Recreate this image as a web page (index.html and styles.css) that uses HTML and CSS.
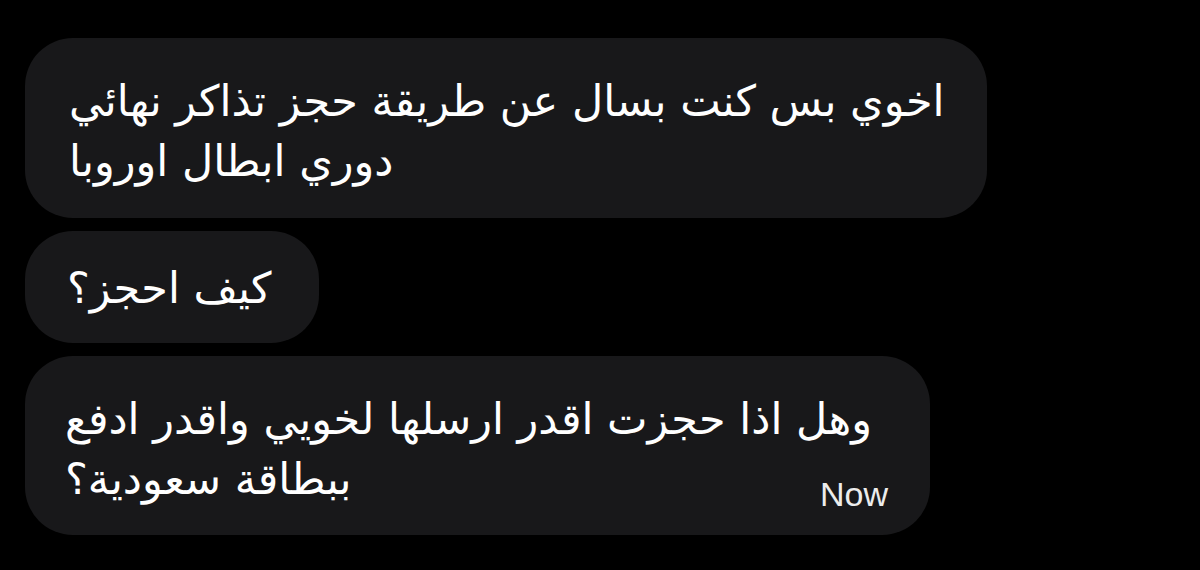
FILE: index.html
```html
<!DOCTYPE html>
<html lang="ar">
<head>
<meta charset="utf-8">
<link rel="stylesheet" href="styles.css">
</head>
<body>
<div class="thread">
  <div class="bubble b1"><p class="msg">اخوي بس كنت بسال عن طريقة حجز تذاكر نهائي دوري ابطال اوروبا</p></div>
  <div class="bubble b2"><p class="msg">كيف احجز؟</p></div>
  <div class="bubble b3"><p class="msg">وهل اذا حجزت اقدر ارسلها لخويي واقدر ادفع ببطاقة سعودية؟</p><span class="time">Now</span></div>
</div>
</body>
</html>
```
FILE: styles.css
```css
html, body {
  margin: 0;
  padding: 0;
  background: #000;
}
body {
  width: 1200px;
  height: 570px;
  overflow: hidden;
  font-family: "DejaVu Sans", "Noto Sans", sans-serif;
}
.thread {
  display: flex;
  flex-direction: column;
  align-items: flex-start;
  gap: 13px;
  padding: 38px 0 0 25px;
}
.bubble {
  position: relative;
  background: #18181a;
  border-radius: 48px;
  box-sizing: border-box;
  direction: rtl;
  color: #fff;
}
.msg {
  margin: 0;
  font-size: 43px;
  line-height: 60px;
  text-align: left;
}
.b1 {
  width: 962px;
  height: 180px;
  padding: 33px 38px 0 44px;
}
.b2 {
  width: 294px;
  height: 112px;
  padding: 27px 30px 0 42px;
}
.b3 {
  width: 905px;
  height: 179px;
  padding: 33px 40px 0 40px;
}
.time {
  position: absolute;
  right: 42px;
  bottom: 21px;
  direction: ltr;
  font-family: "Liberation Sans", Arial, sans-serif;
  font-size: 34px;
  color: #ececec;
}
```
